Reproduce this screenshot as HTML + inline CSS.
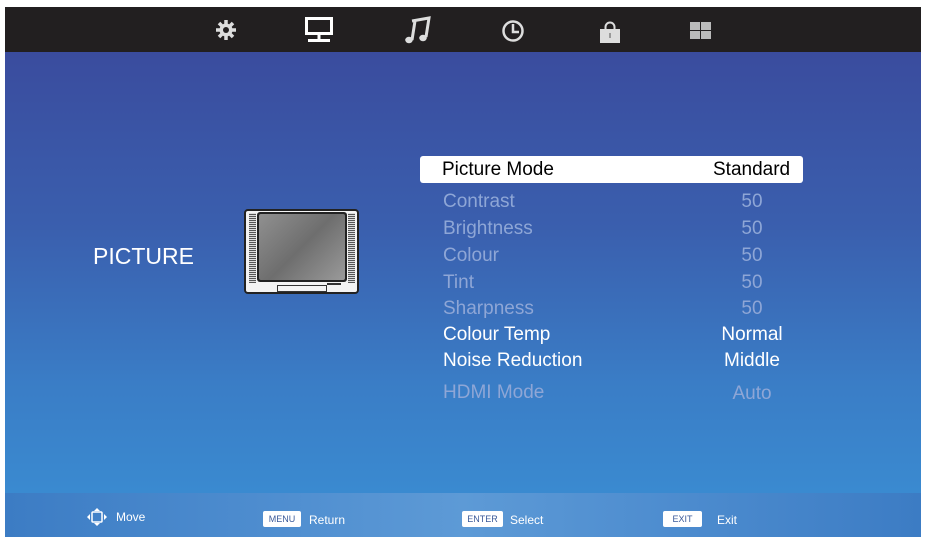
<!DOCTYPE html>
<html><head><meta charset="utf-8"><style>
*{margin:0;padding:0;box-sizing:border-box}
body{width:926px;height:545px;background:#fff;position:relative;overflow:hidden;font-family:"Liberation Sans",Arial,sans-serif}
#top{position:absolute;left:5px;top:7px;width:916px;height:45px;background:#221f20}
#main{position:absolute;left:5px;top:52px;width:916px;height:441px;background:linear-gradient(180deg,#3a4c9e 0%,#3a5fae 40%,#3a7dc6 75%,#3a8ad0 100%)}
#foot{position:absolute;left:5px;top:493px;width:916px;height:44px;background:linear-gradient(90deg,#3c7cc4 0%,#4f8ed0 30%,#5d9ad6 50%,#4f8ed0 70%,#3c7cc4 100%)}
.t{position:absolute;font-size:19px;line-height:22px;color:#8ea6d6}
.v{position:absolute;font-size:19px;line-height:22px;color:#8ea6d6;text-align:center;width:120px;left:692px}
.t.w,.v.w{color:#fff}
.ft{position:absolute;top:511px;font-size:12px;color:#fff;line-height:14px}
.key{position:absolute;top:511px;height:16px;background:#fff;color:#3a5a9a;font-size:9px;line-height:16px;text-align:center;border-radius:2px}
</style></head><body>
<div id="top">
<svg width="916" height="45" style="position:absolute;left:0;top:0">
 <g transform="translate(221,23)" fill="#ddd">
  <g stroke="#ddd" stroke-width="3.5">
   <line x1="-10" y1="0" x2="10" y2="0"/><line x1="0" y1="-10" x2="0" y2="10"/>
   <line x1="-7" y1="-7" x2="7" y2="7"/><line x1="-7" y1="7" x2="7" y2="-7"/>
  </g>
  <circle r="6.5"/><circle r="3" fill="#221f20"/>
 </g>
 <g fill="none" stroke="#fff" stroke-width="3">
  <rect x="301.5" y="11.5" width="25" height="15"/>
  <line x1="314" y1="26" x2="314" y2="33"/>
 </g>
 <rect x="303" y="32" width="22" height="3" fill="#fff"/>
 <path d="M407 14 L424 11 L421 30 M410 14 L407 33" fill="none" stroke="#ddd" stroke-width="3"/>
 <ellipse cx="404" cy="33" rx="3.8" ry="3.2" fill="#ddd"/>
 <ellipse cx="418" cy="31" rx="3.8" ry="3.2" fill="#ddd"/>
 <circle cx="508" cy="24" r="9.5" fill="none" stroke="#ddd" stroke-width="2.5"/>
 <path d="M508 17 V25 H514" fill="none" stroke="#ddd" stroke-width="2.5"/>
 <path d="M600.5 22 v-2 a4.5 4.5 0 0 1 9 0 v2" fill="none" stroke="#ddd" stroke-width="2"/>
 <rect x="595" y="22" width="20" height="14" fill="#ddd"/>
 <rect x="604" y="26" width="2" height="5" fill="#999"/>
 <rect x="685" y="15" width="10" height="8" fill="#bbb"/><rect x="696" y="15" width="10" height="8" fill="#bbb"/>
 <rect x="685" y="24" width="10" height="8" fill="#bbb"/><rect x="696" y="24" width="10" height="8" fill="#bbb"/>
</svg>
</div>
<div id="main"></div>
<div id="foot"></div>

<div class="t w" style="left:93px;top:243px;font-size:23px;line-height:26px">PICTURE</div>

<!-- TV -->
<div style="position:absolute;left:244px;top:209px;width:115px;height:85px;background:#f4f4f4;border:2px solid #222;border-radius:4px"></div>
<div style="position:absolute;left:249px;top:213px;width:7px;height:70px;background:repeating-linear-gradient(0deg,#555 0 1px,#ddd 1px 2px)"></div>
<div style="position:absolute;left:348px;top:213px;width:7px;height:70px;background:repeating-linear-gradient(0deg,#555 0 1px,#ddd 1px 2px)"></div>
<div style="position:absolute;left:257px;top:212px;width:90px;height:70px;background:#222;border-radius:3px"></div>
<div style="position:absolute;left:259px;top:214px;width:86px;height:66px;background:linear-gradient(135deg,#909090,#6e6e6e 50%,#9a9a9a);border-radius:2px"></div>
<div style="position:absolute;left:277px;top:285px;width:50px;height:7px;border:1px solid #333;background:#f4f4f4"></div>
<div style="position:absolute;left:327px;top:283px;width:14px;height:2px;background:#333"></div>

<!-- highlight -->
<div style="position:absolute;left:420px;top:156px;width:383px;height:27px;background:#fff;border-radius:3px"></div>
<div class="t" style="left:442px;top:159px;color:#000">Picture Mode</div>
<div class="t" style="left:713px;top:159px;color:#000">Standard</div>

<div class="t" style="left:443px;top:191px">Contrast</div><div class="v" style="top:191px">50</div>
<div class="t" style="left:443px;top:218px">Brightness</div><div class="v" style="top:218px">50</div>
<div class="t" style="left:443px;top:245px">Colour</div><div class="v" style="top:245px">50</div>
<div class="t" style="left:443px;top:272px">Tint</div><div class="v" style="top:272px">50</div>
<div class="t" style="left:443px;top:298px">Sharpness</div><div class="v" style="top:298px">50</div>
<div class="t w" style="left:443px;top:324px">Colour Temp</div><div class="v w" style="top:324px">Normal</div>
<div class="t w" style="left:443px;top:350px">Noise Reduction</div><div class="v w" style="top:350px">Middle</div>
<div class="t" style="left:443px;top:382px">HDMI Mode</div><div class="v" style="top:383px">Auto</div>

<!-- footer -->
<svg style="position:absolute;left:86px;top:507px" width="22" height="20">
 <path d="M11 1 L14 4 H8 Z M11 19 L8 16 H14 Z M1 10 L4 7 V13 Z M21 10 L18 13 V7 Z" fill="#fff"/>
 <rect x="6" y="5" width="10" height="10" fill="none" stroke="#fff" stroke-width="1.5" rx="1"/>
</svg>
<div class="ft" style="left:116px;top:510px">Move</div>
<div class="key" style="left:263px;width:38px">MENU</div>
<div class="ft" style="left:309px;top:513px">Return</div>
<div class="key" style="left:462px;width:41px">ENTER</div>
<div class="ft" style="left:510px;top:513px">Select</div>
<div class="key" style="left:663px;width:39px">EXIT</div>
<div class="ft" style="left:717px;top:513px">Exit</div>
</body></html>
